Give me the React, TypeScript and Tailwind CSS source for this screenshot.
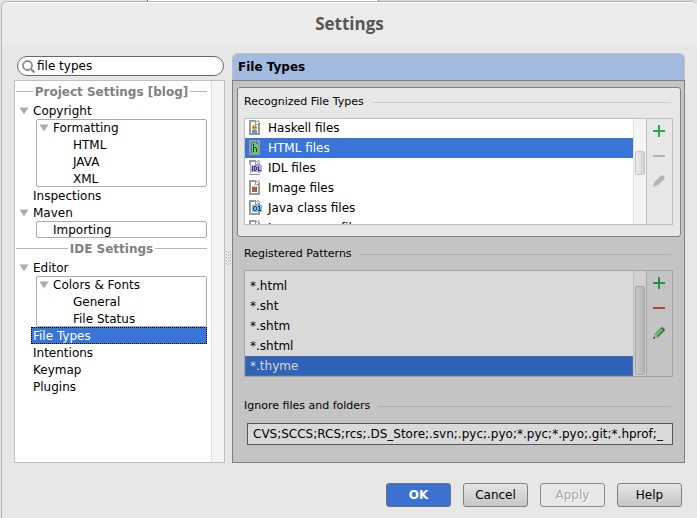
import { useState, type ReactNode } from "react";

function Arrow() {
  return (
    <svg width="10" height="8" viewBox="0 0 10 8" className="shrink-0" aria-hidden="true">
      <path d="M0.5 0.5h9L5 7.5z" fill="#adadad" />
    </svg>
  );
}

function TreeHeader({ children }: { children: ReactNode }) {
  return (
    <div className="flex h-[21px] items-center gap-0.5 pl-px text-[#808080]">
      <span className="h-px flex-1 bg-[#b5b5b5]" />
      <span className="font-bold">{children}</span>
      <span className="h-px flex-1 bg-[#b5b5b5]" />
    </div>
  );
}

function Parent({ label }: { label: string }) {
  return (
    <div className="flex h-[17px] items-center gap-1 pl-1">
      <Arrow />
      <span>{label}</span>
    </div>
  );
}

function Leaf({ label, selected = false }: { label: string; selected?: boolean }) {
  return selected ? (
    <div
      role="treeitem"
      aria-selected="true"
      className="ml-4 flex h-[17px] items-center border border-dotted border-black bg-[#3875d7] pl-px text-white"
    >
      {label}
    </div>
  ) : (
    <div role="treeitem" aria-selected="false" className="flex h-[17px] items-center pl-[18px]">
      {label}
    </div>
  );
}

function Group({ parent, items }: { parent?: string; items: string[] }) {
  return (
    <div role="group" className="relative ml-5 before:absolute before:inset-0 before:left-px before:rounded-xs before:border before:border-[#acacac]">
      {parent && (
        <div className="flex h-[17px] items-center gap-1 pl-1">
          <Arrow />
          <span>{parent}</span>
        </div>
      )}
      {items.map((item) => (
        <div
          key={item}
          role="treeitem"
          aria-selected="false"
          className={parent ? "flex h-[17px] items-center pl-[38px]" : "flex h-[17px] items-center pl-[18px]"}
        >
          {item}
        </div>
      ))}
    </div>
  );
}

type Kind = "haskell" | "html" | "idl" | "image" | "class" | "java";

function FileIcon({ kind }: { kind: Kind }) {
  return (
    <svg width="14" height="16" viewBox="0 0 14 16" className="shrink-0" shapeRendering="crispEdges" aria-hidden="true">
      <path d="M0 0h7v1h1v1h1v1h2v12H0z" fill="#999" />
      <path d="M2 2h4v3h3v8H2z" fill={kind === "html" ? "#3875d7" : "#fff"} />
      <path d="M7 2h1v1h1v1H7z" fill={kind === "html" ? "#3875d7" : "#fff"} />
      <path d="M8 0h2v1h1v2h-1V2H9V1H8z" fill="#b5b5b5" />
      {kind === "haskell" && (
        <g>
          <path d="M4 5h3v1h1v3H7v1H4V9H3V6h1z" fill="#e8a13a" />
          <path d="M4 7h1v1H4zM6 7h1v1H6z" fill="#8a5a30" />
          <path d="M3 10h5v3H3z" fill="#4d9fd6" />
        </g>
      )}
      {kind === "html" && (
        <g>
          <path d="M3 3h3v2h3v8H3z" fill="#5fd35f" />
          <path d="M4 4h1v3h2v1h1v4H7V8H5v4H4z" fill="#17401b" />
        </g>
      )}
      {kind === "image" && (
        <g>
          <path d="M3 7h2v5H3z" fill="#d2483a" />
          <path d="M5 7h1v5H5z" fill="#3d91bb" />
          <path d="M6 7h2v5H6z" fill="#b25036" />
          <path d="M3 6h1v1H3zM5 5h1v2H5zM7 6h1v1H7z" fill="#e2b64b" />
        </g>
      )}
      {kind === "idl" && (
        <g>
          <path d="M1 5h12v7H1z" fill="#b9a5f2" />
          <path d="M0 4h1v9h10v1H0z" fill="#fff" />
          <path d="M3 6h1v5H3zM5 6h2v1h1v3H7v1H5zM6 7v3h1V7zM9 6h1v4h2v1H9z" fill="#39334b" fillRule="evenodd" />
        </g>
      )}
      {(kind === "class" || kind === "java") && (
        <g>
          <path d="M3 5h10v7H3z" fill="#7db9ec" />
          <path d="M4 7h1V6h2v1h1v3H7v1H5v-1H4zM5 7v3h2V7zM9 6h2v4h1v1H9v-1h1V7H9z" fill="#26445e" fillRule="evenodd" />
        </g>
      )}
    </svg>
  );
}

function Pencil({ disabled }: { disabled: boolean }) {
  return disabled ? (
    <svg width="12" height="12" viewBox="0 0 12 12" aria-hidden="true">
      <path d="M0 12l1.500-5 6-6 2-1L12 2.500l-1 2-6 5.500z" fill="#b3b3b3" />
    </svg>
  ) : (
    <svg width="12" height="12" viewBox="0 0 12 12" aria-hidden="true">
      <path d="M0 12l1.500-5L5 10.500z" fill="#d6a56c" />
      <path d="M0 12l1-2.500 1.500 1.500z" fill="#333" />
      <path d="M1.500 7l6-6L11 4.500l-6 6z" fill="#34903f" />
      <path d="M2 7.500l6-6 1.500 1.500-6 6z" fill="#74c47d" />
      <path d="M7.500 1l2-1L12 2.500l-1 2z" fill="#50585a" />
    </svg>
  );
}

function Toolbar({ editable, target }: { editable: boolean; target: string }) {
  return (
    <div className={editable ? "w-[26px] border-l border-[#a5a5a5]" : "w-[26px] border-l border-[#bfbfbf]"}>
      <button type="button" aria-label={"Add " + target} className="flex h-[25px] w-full items-start pt-1.5 pl-1.5">
        <svg width="12" height="12" viewBox="0 0 12 12" aria-hidden="true">
          <path d="M5 0h2v5h5v2H7v5H5V7H0V5h5z" fill={editable ? "#26933e" : "#2bab49"} />
        </svg>
      </button>
      <button type="button" aria-label={"Remove " + target} disabled={!editable} className="flex h-[25px] w-full items-start pt-1.5 pl-1.5">
        <svg width="12" height="12" viewBox="0 0 12 12" aria-hidden="true">
          <path d="M0 5h12v2H0z" fill={editable ? "#b5443a" : "#b3b3b3"} />
        </svg>
      </button>
      <button type="button" aria-label={"Edit " + target} disabled={!editable} className="flex h-[25px] w-full items-start pt-1.5 pl-1.5">
        <Pencil disabled={!editable} />
      </button>
    </div>
  );
}

function SectionTitle({ children, dark = false }: { children: ReactNode; dark?: boolean }) {
  return (
    <div className="flex h-4 items-center gap-2 pr-0.5 text-[11px]">
      <span>{children}</span>
      <span className={dark ? "h-px flex-1 bg-[#adadad]" : "h-px flex-1 bg-[#cccccc]"} />
    </div>
  );
}

const fileTypes: { kind: Kind; label: string }[] = [
  { kind: "haskell", label: "Haskell files" },
  { kind: "html", label: "HTML files" },
  { kind: "idl", label: "IDL files" },
  { kind: "image", label: "Image files" },
  { kind: "class", label: "Java class files" },
  { kind: "java", label: "Java source files" },
];

const patterns = ["*.html", "*.sht", "*.shtm", "*.shtml", "*.thyme"];

export default function App() {
  const [query, setQuery] = useState("file types");
  const [ignored, setIgnored] = useState("CVS;SCCS;RCS;rcs;.DS_Store;.svn;.pyc;.pyo;*.pyc;*.pyo;.git;*.hprof;_");

  return (
    <div className="flex min-h-screen flex-col overflow-hidden bg-[#e4e4e4] pl-px font-['DejaVu_Sans',sans-serif] text-xs text-black">
      <div className="flex h-px">
        <span className="w-[146px] bg-[#e4e4e4]" />
        <span className="w-px bg-[#555]" />
        <span className="w-[230px] bg-white" />
        <span className="w-px bg-[#777]" />
        <span className="flex-1 bg-[#d4d4d4]" />
      </div>
      <div className="flex flex-1 flex-col rounded-t-md border-t border-l border-[#b5b5b5] bg-[#e7e7e7]">
        <header className="flex h-[43px] items-center justify-center rounded-t-md border-t border-white bg-[#ebebeb]">
          <h1 className="font-['Open_Sans',sans-serif] text-[17px] font-bold text-[#555753]">Settings</h1>
        </header>

        <main className="flex flex-1 px-3 pt-2">
          <aside className="flex w-[211px] shrink-0 flex-col gap-1 pt-[3px]">
            <label className="mr-px ml-[3px] flex h-5 items-center gap-0.5 rounded-full border border-[#6b666b] bg-white pl-1">
              <svg width="13" height="13" viewBox="0 0 13 13" className="shrink-0" aria-hidden="true">
                <circle cx="5.500" cy="5.500" r="4.500" fill="none" stroke="#8c8c8c" strokeWidth="1.800" />
                <path d="M9 9l3.500 3.500" stroke="#8c8c8c" strokeWidth="2.200" />
              </svg>
              <input
                type="text"
                aria-label="Search settings"
                value={query}
                onChange={(e) => setQuery(e.target.value)}
                className="min-w-0 flex-1 bg-transparent outline-none"
              />
            </label>
            <div className="flex flex-1 border border-[#bfbfbf] bg-white">
              <div role="tree" aria-label="Settings" className="flex-1 pr-1">
                <TreeHeader>Project Settings [blog]</TreeHeader>
                <Parent label="Copyright" />
                <Group parent="Formatting" items={["HTML", "JAVA", "XML"]} />
                <Leaf label="Inspections" />
                <Parent label="Maven" />
                <Group items={["Importing"]} />
                <TreeHeader>IDE Settings</TreeHeader>
                <Parent label="Editor" />
                <Group parent="Colors & Fonts" items={["General", "File Status"]} />
                <Leaf label="File Types" selected />
                <Leaf label="Intentions" />
                <Leaf label="Keymap" />
                <Leaf label="Plugins" />
              </div>
              <div className="w-[13px] border-l border-[#e0e0e0] bg-[#f4f4f4]" />
            </div>
          </aside>

          <div className="flex w-[7px] shrink-0 items-center justify-center">
            <svg width="5" height="16" viewBox="0 0 5 16" shapeRendering="crispEdges" aria-hidden="true">
              <path d="M0 1h1v1H0zM2 2h1v1H2zM0 4h1v1H0zM2 5h1v1H2zM0 7h1v1H0zM2 8h1v1H2zM0 10h1v1H0zM2 11h1v1H2zM0 13h1v1H0zM2 14h1v1H2zM4 1h1v1H4zM4 4h1v1H4zM4 7h1v1H4zM4 10h1v1H4zM4 13h1v1H4z" fill="#aaa" />
            </svg>
          </div>

          <section className="flex min-w-0 flex-1 flex-col">
            <h2 className="flex h-[27px] items-center rounded-t-md border border-b-0 border-[#bfbfbf] bg-[#a3bae1] pl-[5px] font-bold">
              File Types
            </h2>
            <div className="flex flex-1 flex-col border border-[#808080] bg-[#c4c4c4] pt-1.5 pr-[3px] pb-4 pl-1">
              <div className="rounded-[3px] border border-[#808080] bg-[#e7e7e7] pt-1.5 pr-[7px] pb-[11px] pl-1.5">
                <SectionTitle>Recognized File Types</SectionTitle>
                <div className="mt-2 flex h-[107px] overflow-hidden border border-[#bfbfbf]">
                  <ul role="listbox" aria-label="Recognized File Types" className="-mt-px min-w-0 flex-1 bg-white">
                    {fileTypes.map(({ kind, label }) => (
                      <li
                        key={kind}
                        role="option"
                        aria-selected={kind === "html"}
                        className={
                          kind === "html"
                            ? "flex h-5 items-center bg-[#3875d7] pl-1 text-white"
                            : "flex h-5 items-center pl-1"
                        }
                      >
                        <FileIcon kind={kind} />
                        <span className="pl-[5px]">{label}</span>
                      </li>
                    ))}
                  </ul>
                  <div className="w-[13px] border-l border-[#e0e0e0] bg-[#f4f4f4] px-px pt-8">
                    <div className="h-6 rounded-xs border border-[#c4c4c4] bg-linear-to-r from-[#ededed] to-[#d0d0d0]" />
                  </div>
                  <Toolbar editable={false} target="file type" />
                </div>
              </div>

              <div className="pt-[9px] pr-2 pl-[7px]">
                <SectionTitle dark>Registered Patterns</SectionTitle>
                <div className="mt-2 flex h-[107px] overflow-hidden border border-[#a5a5a5]">
                  <ul role="listbox" aria-label="Registered Patterns" className="flex min-w-0 flex-1 flex-col justify-end bg-[#d9d9d9]">
                    {patterns.map((pattern) => (
                      <li
                        key={pattern}
                        role="option"
                        aria-selected={pattern === "*.thyme"}
                        className={
                          pattern === "*.thyme"
                            ? "flex h-5 items-center border border-[#4a6fa9] bg-[#2e63b8] pl-1 text-[#d9d9d9]"
                            : "flex h-5 items-center pl-[5px]"
                        }
                      >
                        {pattern}
                      </li>
                    ))}
                  </ul>
                  <div className="w-[13px] border-l border-[#c0c0c0] bg-[#d0d0d0] px-px pt-[15px] pb-px">
                    <div className="h-full rounded-xs border border-[#a5a5a5] bg-linear-to-r from-[#c9c9c9] to-[#b2b2b2]" />
                  </div>
                  <Toolbar editable target="pattern" />
                </div>

                <label htmlFor="ignored" className="mt-[21px] block">
                  <SectionTitle dark>Ignore files and folders</SectionTitle>
                </label>
                <div className="mt-[9px] ml-[3px] flex">
                  <input
                    id="ignored"
                    type="text"
                    value={ignored}
                    onChange={(e) => setIgnored(e.target.value)}
                    className="h-[22px] w-full min-w-0 border border-[#555] bg-[#d9d9d9] px-[5px] outline-none"
                  />
                </div>
              </div>
            </div>
          </section>
        </main>

        <footer className="flex justify-end gap-3 pt-5 pr-[15px] pb-[11px]">
          <button type="button" className="h-6 w-[65px] rounded-[3px] border border-[#6b7285] bg-[#3b72cf] font-bold text-white">
            OK
          </button>
          <button type="button" className="h-6 w-[65px] rounded-[3px] border border-[#808080] bg-linear-to-b from-[#e5e5e5] to-[#c6c6c6]">
            Cancel
          </button>
          <button type="button" disabled className="h-6 w-[65px] rounded-[3px] border border-[#8c8c8c] text-[#a5a5a5] text-shadow-[1px_1px_0_#fff]">
            Apply
          </button>
          <button type="button" className="h-6 w-[65px] rounded-[3px] border border-[#808080] bg-linear-to-b from-[#e5e5e5] to-[#c6c6c6]">
            Help
          </button>
        </footer>
      </div>
    </div>
  );
}
